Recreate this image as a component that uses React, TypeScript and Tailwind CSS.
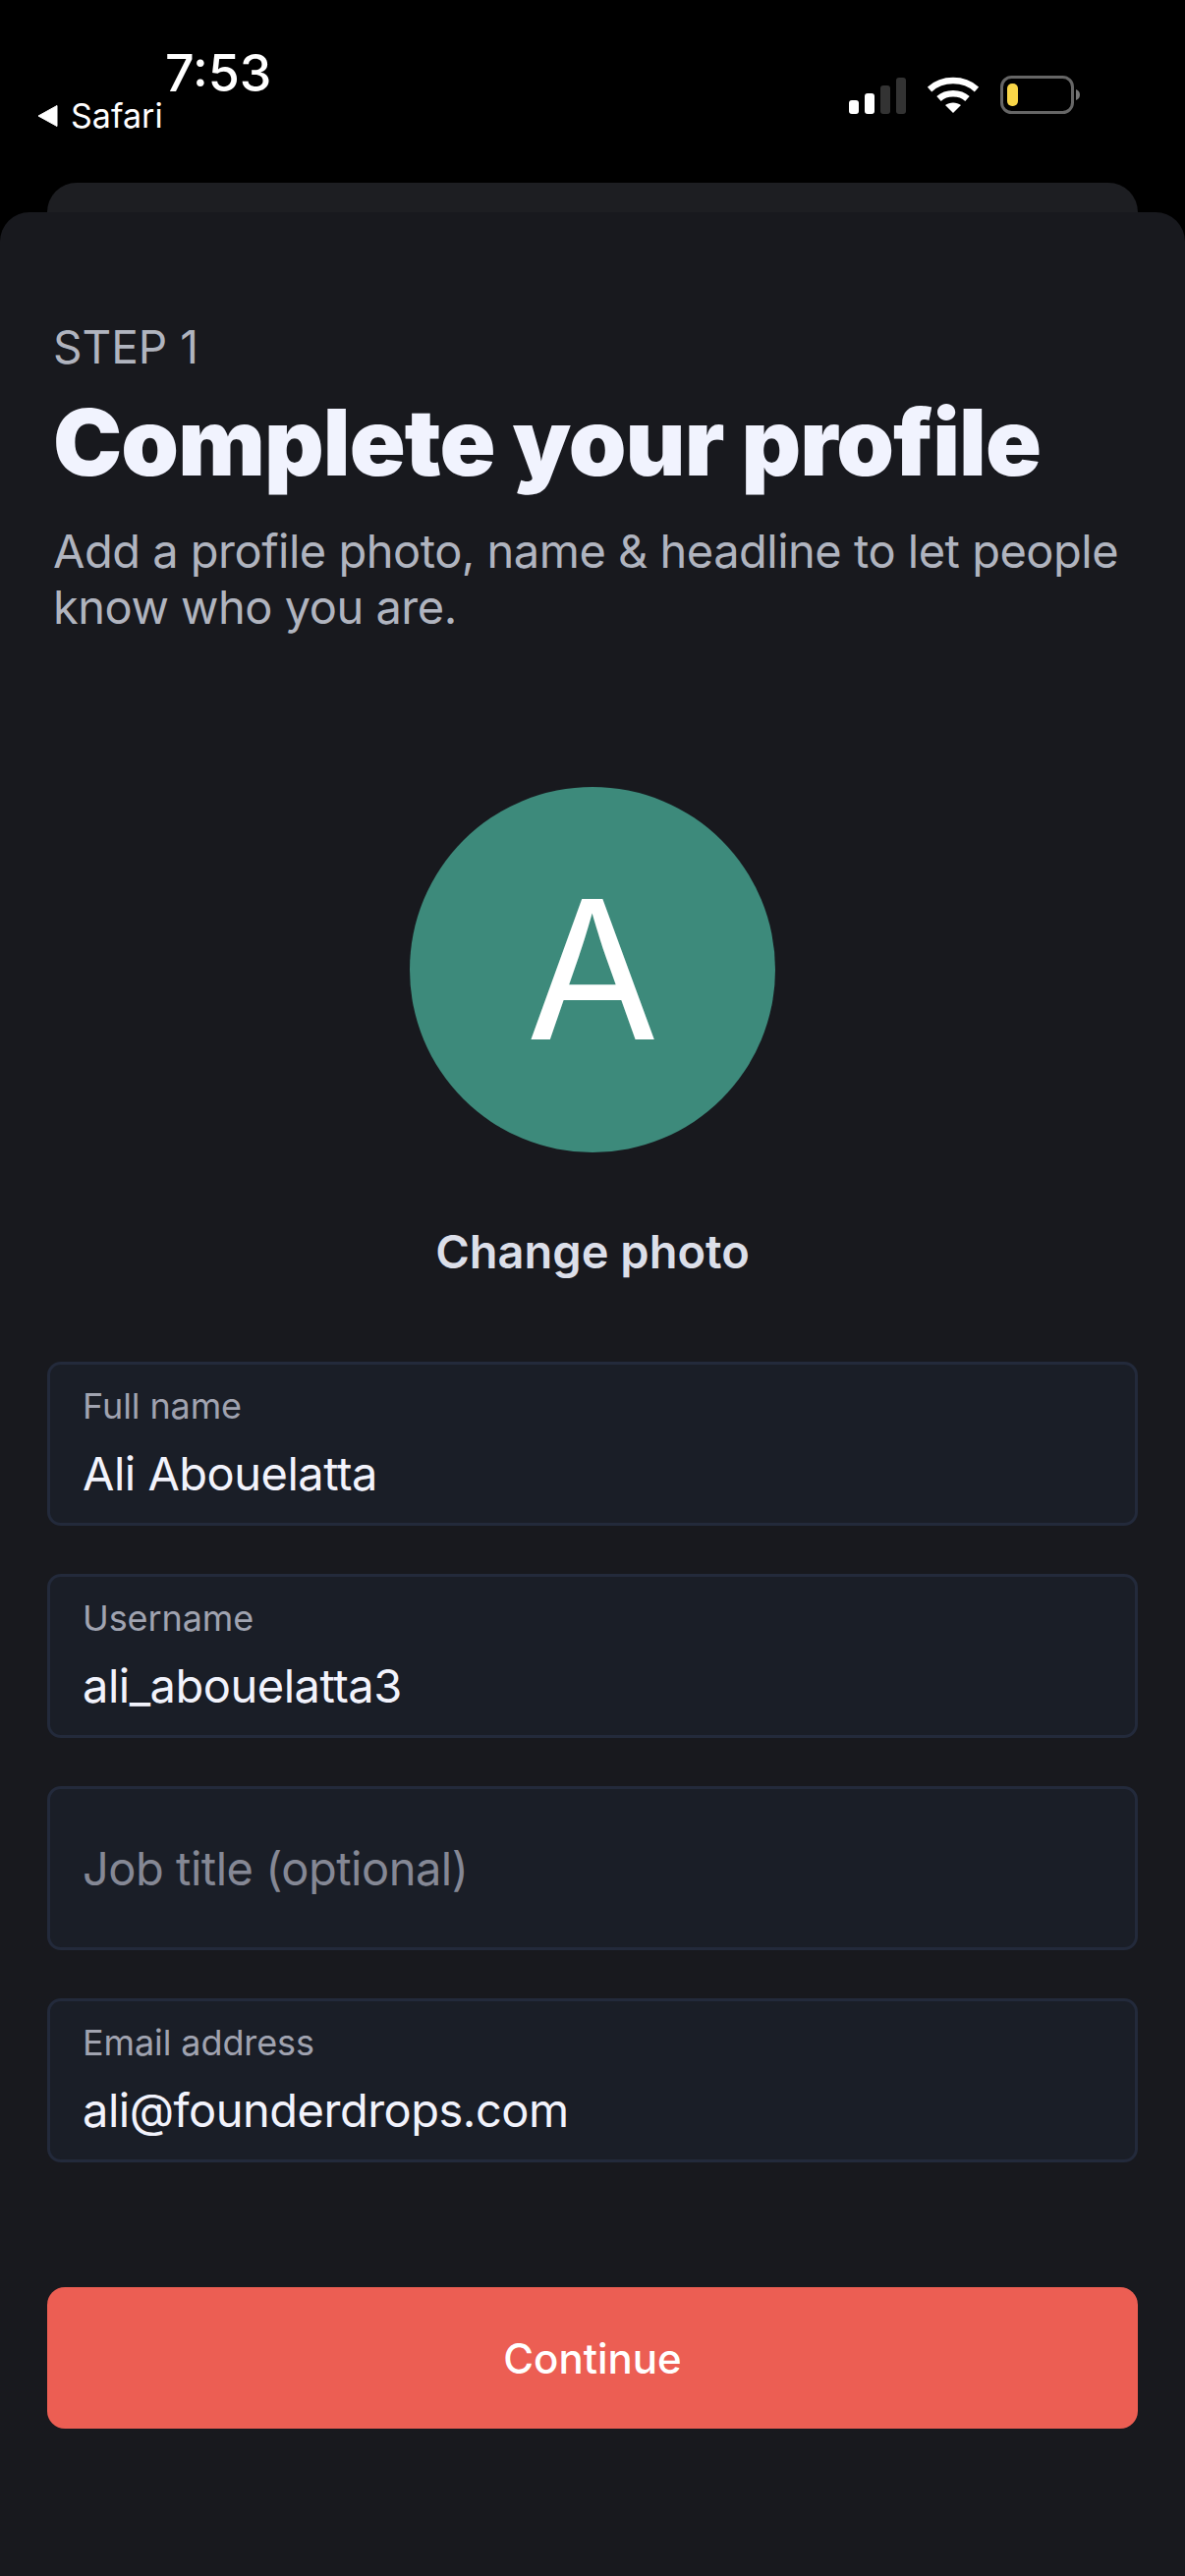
const FIELDS = [
  { label: "Full name", value: "Ali Abouelatta" },
  { label: "Username", value: "ali_abouelatta3" },
  { label: "", value: "Job title (optional)" },
  { label: "Email address", value: "ali@founderdrops.com" },
];

const StatusIcons = () => (
  <div className="flex items-center">
    {/* Signal */}
    <svg width="60" height="38" viewBox="0 0 60 38" className="block">
      <rect x="1" y="24" width="10" height="14" rx="3" fill="#fff" />
      <rect x="17" y="17" width="10" height="21" rx="3" fill="#fff" />
      <rect x="33" y="9" width="10" height="29" rx="3" fill="#333" />
      <rect x="49" y="1" width="10" height="37" rx="3" fill="#333" />
    </svg>
    {/* Wifi */}
    <svg width="52" height="38" viewBox="0 0 52 38" className="ml-[21px] block">
      <path d="M2 13C15 1 37 1 50 13" fill="none" stroke="#fff" strokeWidth="6.5" />
      <path d="M11.500 22.500C19 15.500 33 15.500 40.500 22.500" fill="none" stroke="#fff" strokeWidth="6.500" />
      <path d="M26 37L18 29C22.500 25.500 29.500 25.500 34 29Z" fill="#fff" />
    </svg>
    {/* Battery */}
    <svg width="82" height="40" viewBox="0 0 82 40" className="ml-[22px] block">
      <rect x="1.500" y="1.500" width="72" height="36" rx="10" fill="none" stroke="#666" strokeWidth="3" />
      <rect x="7" y="8" width="11" height="23" rx="5" fill="#f9d648" />
      <path d="M77 14C80 15 81 17 81 19.500C81 22 80 24 77 25Z" fill="#777" />
    </svg>
  </div>
);

const App = () => {
  return (
    <div className="flex h-[2622px] w-[1206px] flex-col overflow-hidden bg-black font-['Inter',sans-serif]">
      {/* Status bar */}
      <div className="flex h-[186px] shrink-0 items-start justify-between pl-[38px] pr-[106px]">
        <div className="flex flex-col">
          <div className="mt-[49px] ml-[130px] text-[52px] leading-[52px] font-medium text-white">7:53</div>
          <div className="flex items-center gap-[13px] text-[34px] leading-[34px] font-normal text-white">
            <svg width="21" height="24" viewBox="0 0 21 24" className="block">
              <path d="M20 1.500V22.500L1 12Z" fill="#fff" stroke="#fff" strokeLinejoin="round" />
            </svg>
            Safari
          </div>
        </div>
        <div className="mt-[77px]">
          <StatusIcons />
        </div>
      </div>

      {/* Card peeking out behind the sheet */}
      <div className="mx-12 h-[30px] shrink-0 rounded-t-[30px] bg-[#1d1e22]" />

      {/* Sheet */}
      <div className="flex flex-1 flex-col rounded-t-[30px] bg-[#18191e] px-12">
        <div className="px-[6px] pt-[109px]">
          <div className="text-[46px] leading-[56px] text-[#b0b4bf]">STEP 1</div>
          <h1 className="mt-[14px] text-[94px] leading-[110px] font-black tracking-[-0.9px] text-[#f1f3fe]">
            Complete your profile
          </h1>
          <p className="mt-[27px] text-[47px] leading-[57px] tracking-[-0.5px] text-[#b0b4bf]">
            Add a profile photo, name &amp; headline to let people know who you are.
          </p>
        </div>

        <div className="mt-[155px] flex flex-col items-center">
          <div className="flex h-[372px] w-[372px] items-center justify-center rounded-full bg-[#3d8a7b] text-[196px] leading-none font-normal text-white">
            A
          </div>
          <div className="mt-[73px] text-[47px] leading-[56px] font-semibold text-[#dcdfe9]">Change photo</div>
        </div>

        <div className="mt-[84px] flex flex-col gap-[49px]">
          {FIELDS.map((f) => (
            <div
              key={f.value}
              className="flex h-[167px] flex-col justify-center rounded-[14px] border-[3px] border-[#232a3b] bg-[#1a1e27] px-[33px]"
            >
              {f.label ? (
                <>
                  <div className="text-[36px] leading-[42px] tracking-[-0.1px] text-[#a0a3b0]">{f.label}</div>
                  <div className="mt-[19px] text-[47px] leading-[58px] tracking-[-0.5px] text-[#f2f3fc]">{f.value}</div>
                </>
              ) : (
                <div className="text-[47px] leading-[58px] tracking-[-0.5px] text-[#858895]">{f.value}</div>
              )}
            </div>
          ))}
        </div>

        <button className="mt-[127px] h-[144px] rounded-[18px] bg-[#ec5e53] text-[42px] font-[550] text-white">
          Continue
        </button>
      </div>
    </div>
  );
};

export default App;
